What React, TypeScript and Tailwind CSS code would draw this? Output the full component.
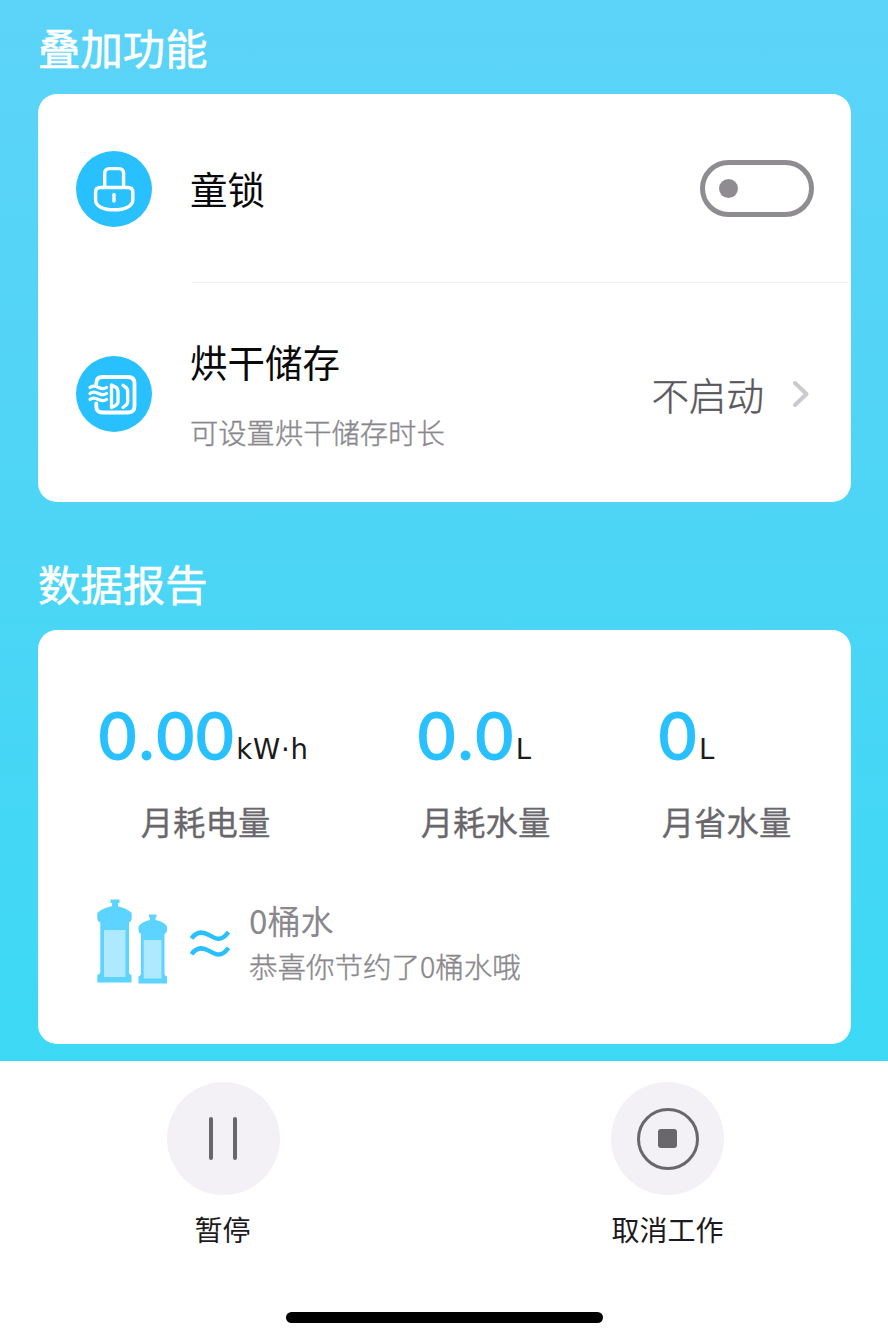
import React from "react";

const LockIcon = () => (
  <svg viewBox="0 0 76 76" className="h-[76px] w-[76px] shrink-0" fill="none">
    <circle cx="38" cy="38" r="38" fill="#29c0ff" />
    <g stroke="#fff" strokeWidth="3.4" strokeLinecap="round" strokeLinejoin="round">
      <path d="M28.700 36V22.500Q28.700 17.600 33.500 17.600H42.800Q47.600 17.600 47.600 22.500V36" />
      <path d="M24.500 36.500H52Q56.800 36.500 56.800 41V49C56.800 55 49 58.800 38 58.800S19.600 55 19.600 49V41Q19.600 36.500 24.500 36.500Z" />
      <path d="M38 43.500V50" />
    </g>
  </svg>
);

const DryIcon = () => (
  <svg viewBox="0 0 76 76" className="h-[76px] w-[76px] shrink-0" fill="none">
    <circle cx="38" cy="38" r="38" fill="#29c0ff" />
    <path
      d="M20.300 28V27Q20.300 21 26.500 21H52Q58.500 21 58.500 27.500V50Q58.500 56.500 52 56.500H26.500Q20.300 56.500 20.300 50.500V47.500"
      stroke="#fff"
      strokeWidth="3.8"
      strokeLinecap="round"
    />
    <g stroke="#fff" strokeWidth="3.200" strokeLinecap="round">
      <path d="M14 31.500C17 29 19.500 30 22.500 31.500S28 33.300 30.500 31.500" />
      <path d="M14 37.500C17 35 19.500 36 22.500 37.500S28 39.300 30.500 37.500" />
      <path d="M14 43.500C17 41 19.500 42 22.500 43.500S28 45.300 30.500 43.500" />
    </g>
    <g stroke="#fff" strokeLinejoin="round" strokeLinecap="round">
      <path d="M35.500 29V51.500L39.500 49.500Q42 48 42 45.500V35.500Q42 32.500 39.500 31Z" strokeWidth="3.300" />
      <path d="M47 29.300L49.200 31Q51.700 32.500 51.700 35.500V45.500Q51.700 48 49.200 49.700L47 51.500" strokeWidth="3.300" />
    </g>
  </svg>
);

const Bottles = () => (
  <svg viewBox="0 0 74 88" className="h-[88px] w-[74px] shrink-0">
    <g fill="#5dd3ff">
      <path d="M13.500 1.500H22.500V5H21V8.200C27 9.500 32 12 34.700 15V21Q34.500 23.500 32 24.800V74.500Q32 76 34.500 77V84.500H.300V77Q2.800 76 3.300 74.500V24.800Q.500 23.500 .300 21V15C3 12 8 9.500 15 8.200V5H13.500Z" />
      <path d="M52 16.500H59.500V19.500H58.500V22C64 23 68.500 25.500 70 28.500V33Q69.500 35 67.500 36V76Q68 78 70 78.500V85.500H41.500V78.500Q43.500 78 44 76V36Q42 35 41.500 33V28.500C43.500 25.500 47.500 23 53 22V19.500H52Z" />
    </g>
    <path fill="#aee9ff" d="M7 32H28.500V79H7ZM46.700 42H64.500V80.500H46.700Z" />
  </svg>
);

const Stat = ({ value, unit, label, width }: { value: string; unit: string; label: string; width: string }) => (
  <div className={`flex flex-col items-center ${width}`}>
    <div className="flex h-[80px] w-full items-baseline whitespace-nowrap pl-px leading-[78px]">
      <span className="font-[Lato] text-[64px] tracking-[2.300px] text-[#29c0ff] [-webkit-text-stroke:1.800px_#29c0ff]">
        {value.split("").map((c, i) => (
          <span key={i} className={c === "." ? "mx-[0.500px]" : ""}>{c}</span>
        ))}
      </span>
      <span className="ml-[0.500px] font-['DejaVu_Sans'] text-[27.500px] tracking-[0.800px] text-[#1c1a20]">{unit}</span>
    </div>
    <div className="mt-[21px] whitespace-nowrap text-[32.400px] leading-[48px] text-[#69676c] [-webkit-text-stroke:0.300px_#69676c]">{label}</div>
  </div>
);

export default function App() {
  return (
    <div className="flex h-[1342px] w-[888px] flex-col overflow-hidden bg-white font-['Noto_Sans_CJK_SC',sans-serif]">
      <main className="h-[1061px] bg-linear-to-b from-[#5cd3f8] via-[#4dd5f6] to-[#3cd9f5] pl-[38px] pr-[37px]">
        <h1 className="pt-[15px] text-[42.400px] leading-[64px] text-white [-webkit-text-stroke:0.600px_white]">叠加功能</h1>
        <section className="mt-[15px] h-[408px] rounded-[19px] bg-white pl-[38px]">
          <div className="flex h-[188px] items-center pt-px">
            <LockIcon />
            <span className="ml-[38px] text-[37.500px] text-[#09090b]">童锁</span>
            <div className="ml-auto mr-[37px] flex h-[57px] w-[114px] items-center rounded-full border-[5px] border-[#8e8c91] pl-[14px]">
              <div className="h-[19px] w-[19px] rounded-full bg-[#8e8c91]" />
            </div>
          </div>
          <div className="ml-[115px] mr-[3px] h-px bg-[#f2f1f3]" />
          <div className="flex h-[219px] items-center pt-[3px]">
            <DryIcon />
            <div className="-mt-[2px] ml-[38px] flex flex-col">
              <span className="text-[37.500px] leading-[56px] text-[#09090b]">烘干储存</span>
              <span className="mt-[22px] text-[28.300px] font-light leading-[42px] text-[#8a888d] [-webkit-text-stroke:0.400px_#8a888d]">可设置烘干储存时长</span>
            </div>
            <span className="ml-auto text-[37.500px] font-light text-[#59575c] [-webkit-text-stroke:0.400px_#59575c]">不启动</span>
            <svg viewBox="0 0 18 28" className="ml-[28px] mr-[41px] h-[28px] w-[18px]" fill="none">
              <path d="M3 3L14.500 14L3 25" stroke="#cbc9ce" strokeWidth="4" strokeLinecap="round" strokeLinejoin="round" />
            </svg>
          </div>
        </section>
        <h2 className="pt-[49px] text-[42.400px] leading-[64px] text-white [-webkit-text-stroke:0.600px_white]">数据报告</h2>
        <section className="mt-[15px] h-[414px] rounded-[19px] bg-white pl-[60px] pt-[66px]">
          <div className="flex gap-[104px]">
            <Stat value="0.00" unit="kW·h" label="月耗电量" width="w-[215px]" />
            <Stat value="0.0" unit="L" label="月耗水量" width="w-[137px]" />
            <Stat value="0" unit="L" label="月省水量" width="w-[137px]" />
          </div>
          <div className="-ml-px mt-[52px] flex items-start pt-px">
            <Bottles />
            <svg viewBox="0 0 40 32" className="ml-[19px] mt-[31px] h-[32px] w-[40px] shrink-0" fill="none" stroke="#29c0ff" strokeWidth="4.400">
              <path d="M1.500 9.500C6 3 12 2 19 6S31 13 38.500 3" />
              <path d="M1.500 25.300C6 18.800 12 17.800 19 21.800S31 28.800 38.500 18.800" />
            </svg>
            <div className="-mt-px ml-[19px] flex flex-col text-[#8a888d]">
              <span className="text-[33.200px] leading-[46px]">0桶水</span>
              <span className="text-[28.500px] font-light leading-[46px] [-webkit-text-stroke:0.400px_#8a888d]">恭喜你节约了0桶水哦</span>
            </div>
          </div>
        </section>
      </main>
      <footer className="flex h-[281px] flex-col items-center bg-white">
        <div className="grid w-full grid-cols-2 pt-[21px]">
          <button className="flex flex-col items-center pl-[3px]">
            <span className="flex h-[113px] w-[113px] items-center justify-center gap-[20px] rounded-full bg-[#f3f1f5] pr-[2px]">
              <span className="h-[43px] w-[4px] rounded-full bg-[#69676c]" />
              <span className="h-[43px] w-[4px] rounded-full bg-[#69676c]" />
            </span>
            <span className="mt-[13px] pr-[2px] text-[28px] leading-[42px] text-[#1c1a20]">暂停</span>
          </button>
          <button className="flex flex-col items-center pl-[3px]">
            <span className="flex h-[113px] w-[113px] items-center justify-center rounded-full bg-[#f3f1f5]">
              <span className="flex h-[62px] w-[62px] items-center justify-center rounded-full border-[3px] border-[#69676c]">
                <span className="h-[19px] w-[19px] rounded-[3px] bg-[#69676c]" />
              </span>
            </span>
            <span className="mt-[13px] text-[28px] leading-[42px] text-[#1c1a20]">取消工作</span>
          </button>
        </div>
        <div className="mt-[62px] h-[11px] w-[317px] rounded-full bg-black" />
      </footer>
    </div>
  );
}
